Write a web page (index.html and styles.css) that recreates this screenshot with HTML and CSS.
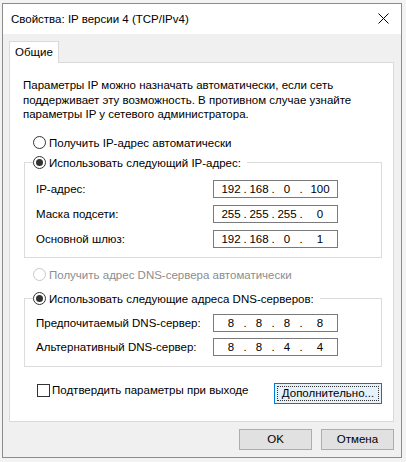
FILE: index.html
```html
<!DOCTYPE html>
<html lang="ru">
<head>
    <meta charset="UTF-8">
    <meta name="viewport" content="width=device-width, initial-scale=1.0">
    <title>Свойства: IP версии 4 (TCP/IPv4)</title>
    <link rel="stylesheet" href="styles.css">
</head>
<body>
    <div class="window">
        <div class="titlebar">
            <span class="title">Свойства: IP версии 4 (TCP/IPv4)</span>
            <svg class="close" width="11" height="11" viewBox="0 0 11 11">
                <path d="M0.5 0.5 L10.5 10.5 M10.5 0.5 L0.5 10.5" stroke="#000" stroke-width="1" fill="none"/>
            </svg>
        </div>
        <div class="dialog">
            <div class="tabs">
                <div class="tab">Общие</div>
            </div>
            <div class="panel">
                <p class="intro">Параметры IP можно назначать автоматически, если сеть<br>поддерживает эту возможность. В противном случае узнайте<br>параметры IP у сетевого администратора.</p>

                <label class="option"><span class="radio"></span>Получить IP-адрес автоматически</label>
                <fieldset class="group">
                    <legend class="option"><span class="radio checked"></span>Использовать следующий IP-адрес:</legend>
                    <div class="field">
                        <span>IP-адрес:</span>
                        <div class="ip"><span>192</span><i>.</i><span>168</span><i>.</i><span>0</span><i>.</i><span>100</span></div>
                    </div>
                    <div class="field">
                        <span>Маска подсети:</span>
                        <div class="ip"><span>255</span><i>.</i><span>255</span><i>.</i><span>255</span><i>.</i><span>0</span></div>
                    </div>
                    <div class="field">
                        <span>Основной шлюз:</span>
                        <div class="ip"><span>192</span><i>.</i><span>168</span><i>.</i><span>0</span><i>.</i><span>1</span></div>
                    </div>
                </fieldset>

                <label class="option disabled"><span class="radio"></span>Получить адрес DNS-сервера автоматически</label>
                <fieldset class="group dns">
                    <legend class="option"><span class="radio checked"></span>Использовать следующие адреса DNS-серверов:</legend>
                    <div class="field">
                        <span>Предпочитаемый DNS-сервер:</span>
                        <div class="ip"><span>8</span><i>.</i><span>8</span><i>.</i><span>8</span><i>.</i><span>8</span></div>
                    </div>
                    <div class="field">
                        <span>Альтернативный DNS-сервер:</span>
                        <div class="ip"><span>8</span><i>.</i><span>8</span><i>.</i><span>4</span><i>.</i><span>4</span></div>
                    </div>
                </fieldset>

                <div class="footer-row">
                    <label class="check"><span class="box"></span>Подтвердить параметры при выходе</label>
                    <button class="btn advanced"><span>Дополнительно...</span></button>
                </div>
            </div>
            <div class="actions">
                <button class="btn">OK</button>
                <button class="btn">Отмена</button>
            </div>
        </div>
    </div>
</body>
</html>
```

FILE: styles.css
```css
body, html {
    margin: 0;
    padding: 0;
    background-color: #f3f3f3;
    font-family: "Liberation Sans", Arial, sans-serif;
    font-size: 11.5px;
    color: #000;
}
.window {
    margin: 3px 0 0 2px;
    width: 400px;
    box-sizing: border-box;
    border: 1px solid #8c8c8c;
    background-color: #f0f0f0;
    white-space: nowrap;
}
.titlebar {
    height: 29px;
    background-color: #fff;
    display: flex;
    align-items: center;
    justify-content: space-between;
    padding: 0 12px 1px 8px;
}
.title {
    font-size: 11.5px;
}
.close {
    display: block;
}
.dialog {
    padding: 7px 7px 7px 6px;
}
.tabs {
    display: flex;
}
.tab {
    position: relative;
    width: 50px;
    height: 22px;
    box-sizing: border-box;
    border: 1px solid #d9d9d9;
    border-bottom: none;
    background-color: #fff;
    margin-bottom: -1px;
    text-align: center;
    line-height: 21px;
}
.panel {
    background-color: #fff;
    border: 1px solid #d9d9d9;
    padding: 15px 11px 17px 13px;
}
.intro {
    margin: 0;
    line-height: 14.5px;
}
.option {
    display: flex;
    align-items: center;
    height: 20px;
    gap: 3px;
}
label.option {
    margin: 11px 0 0 10px;
}
label.option.disabled {
    margin-top: 7px;
    color: #8d8d8d;
}
.radio {
    width: 13px;
    height: 13px;
    box-sizing: border-box;
    border: 1px solid #333;
    border-radius: 50%;
    background-color: #fff;
    display: flex;
    align-items: center;
    justify-content: center;
}
.radio.checked::after {
    content: "";
    width: 7px;
    height: 7px;
    border-radius: 50%;
    background-color: #333;
}
.disabled .radio {
    border-color: #c8c8c8;
}
.group {
    margin: 0 0 0 1px;
    padding: 7px 43px 9px 8px;
    border: 1px solid #dcdcdc;
    display: grid;
    row-gap: 7px;
}
.group.dns {
    margin-top: 4px;
    padding-top: 5px;
    padding-bottom: 10px;
    row-gap: 6px;
}
.group legend {
    padding: 0 6px 0 0;
}
.field {
    display: grid;
    grid-template-columns: 1fr 125px;
    align-items: center;
    padding-left: 3px;
}
.ip {
    height: 18px;
    box-sizing: border-box;
    border: 1px solid #7a7a7a;
    display: flex;
    align-items: center;
    padding-left: 5px;
}
.ip span {
    width: 24px;
    text-align: center;
}
.ip span:last-child {
    flex: 1;
}
.ip i {
    font-style: normal;
    width: 4px;
    text-align: center;
}
.footer-row {
    display: flex;
    justify-content: space-between;
    align-items: flex-start;
    margin-top: 16px;
}
.check {
    display: flex;
    align-items: center;
    gap: 2px;
    margin: 0 0 0 14px;
    line-height: 15px;
}
.box {
    width: 13px;
    height: 13px;
    box-sizing: border-box;
    border: 1px solid #333;
    background-color: #fff;
}
.btn {
    font-family: inherit;
    font-size: 11.5px;
    color: #000;
    height: 21px;
    width: 73px;
    padding: 0;
    border: 1px solid #adadad;
    background-color: #e1e1e1;
}
.btn.advanced {
    width: 108px;
    border-color: #0078d7;
    background-color: #e5f1fb;
    padding: 2px;
}
.btn.advanced span {
    display: block;
    height: 15px;
    line-height: 15px;
    outline: 1px dotted #333;
    outline-offset: -1px;
}
.actions {
    display: flex;
    justify-content: flex-end;
    gap: 9px;
    margin-top: 7px;
}
```
